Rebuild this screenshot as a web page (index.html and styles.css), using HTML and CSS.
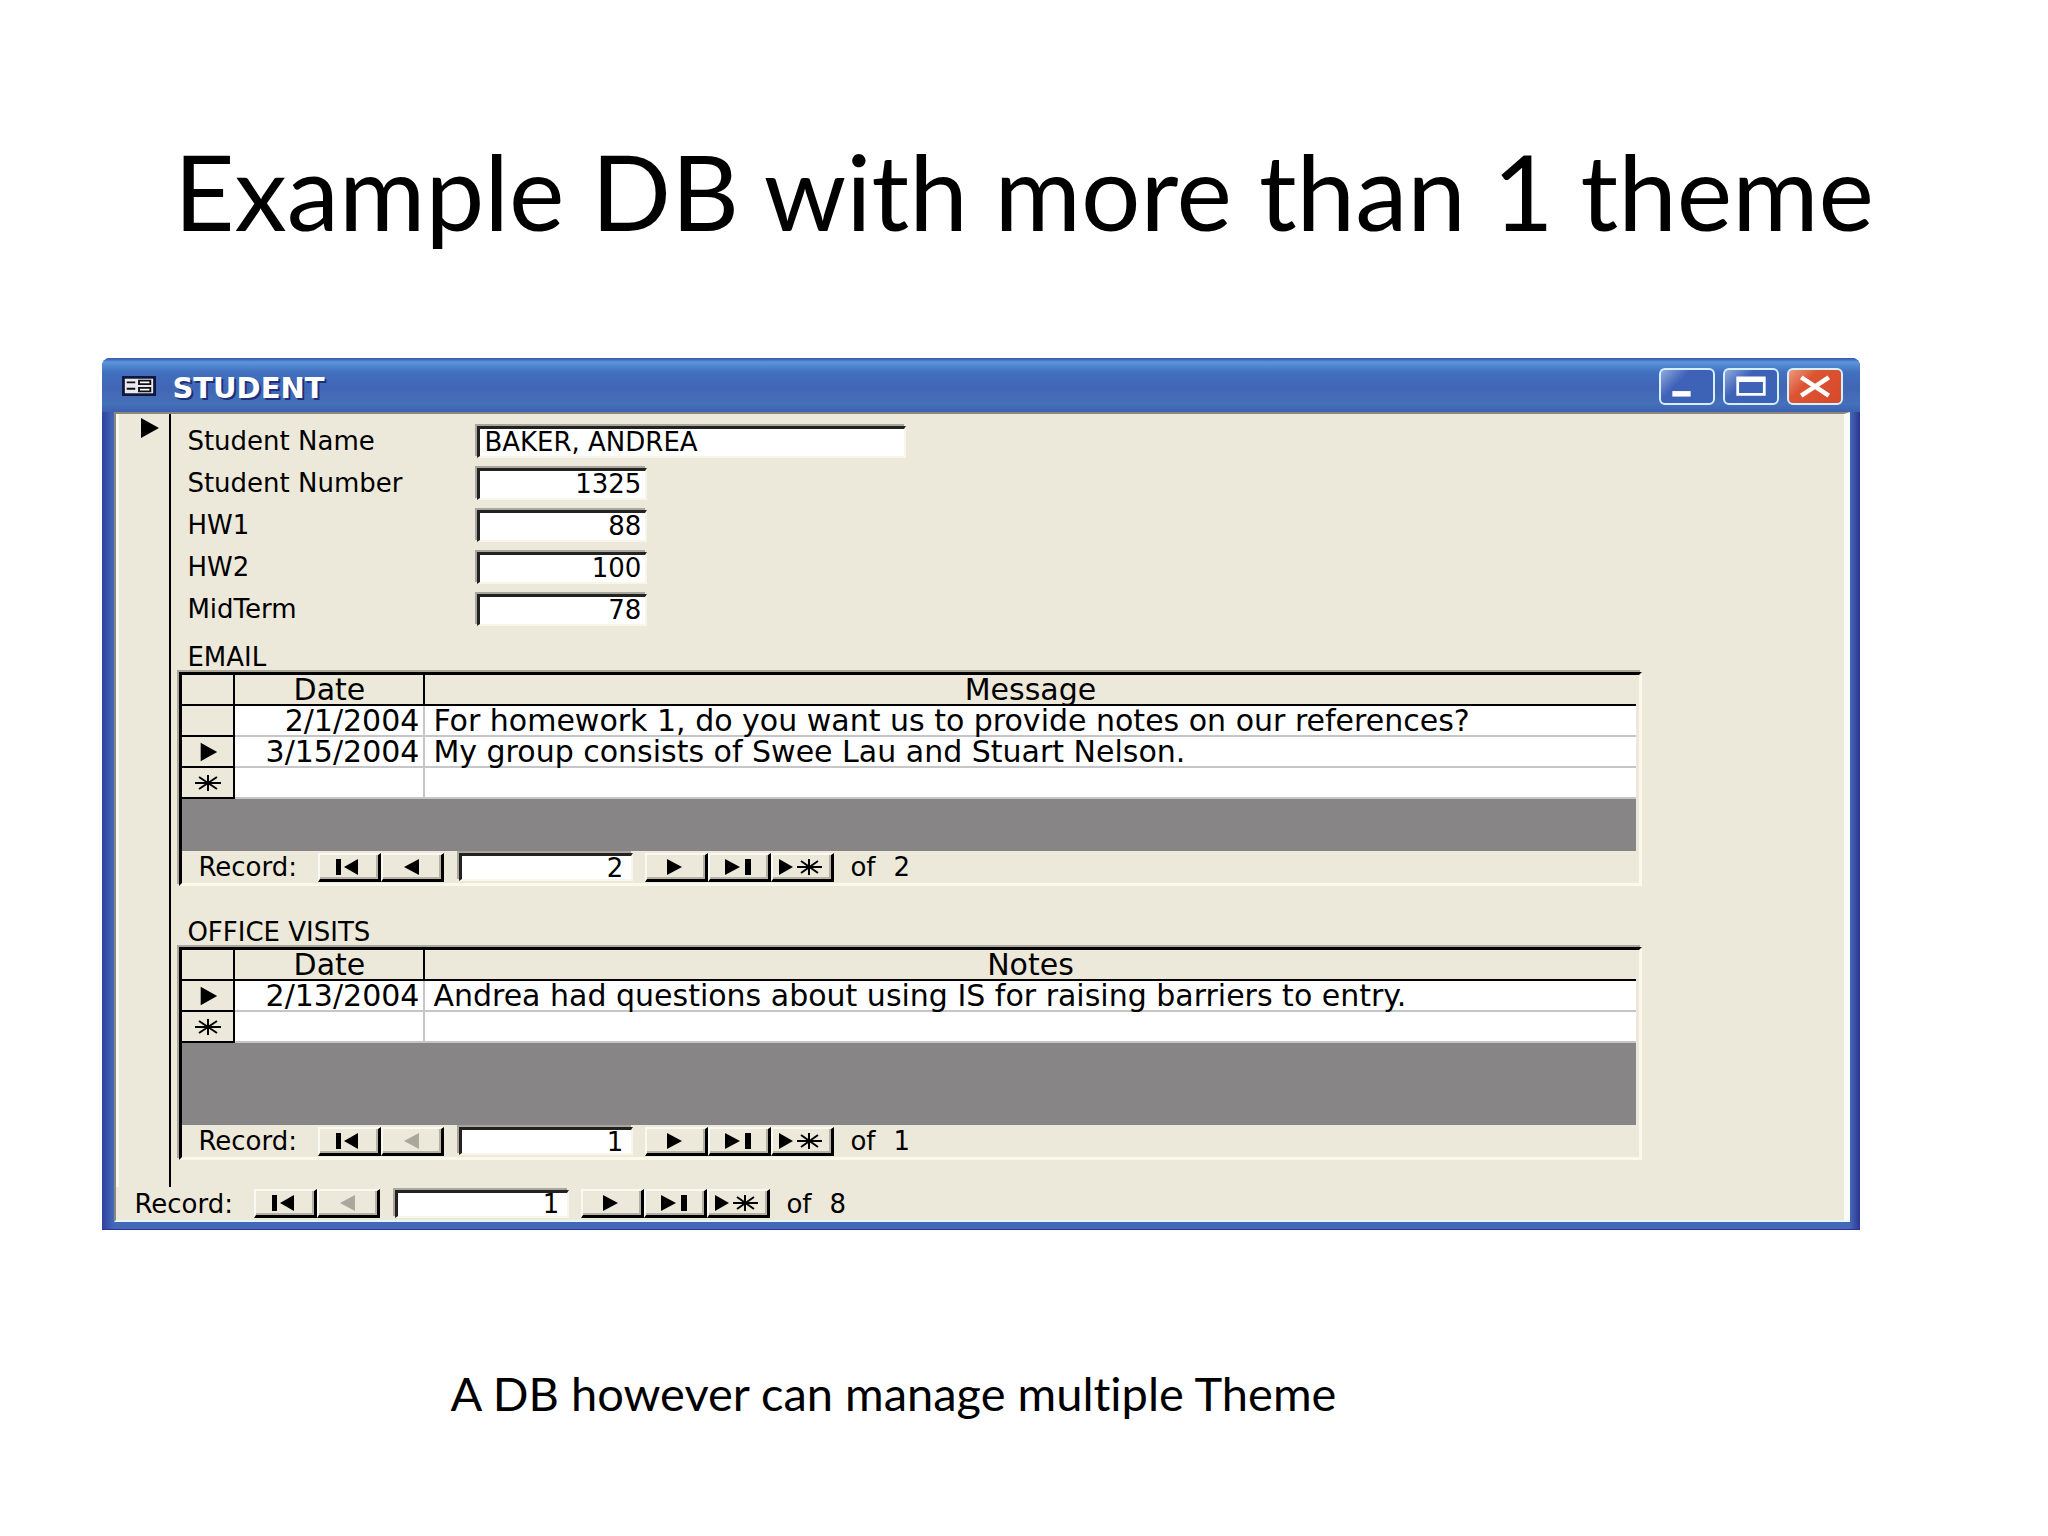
FILE: index.html
```html
<!DOCTYPE html>
<html lang="en">
<head>
  <meta charset="UTF-8">
  <title>Example DB with more than 1 theme</title>
  <link rel="stylesheet" href="styles.css">
</head>
<body>
  <!-- shared record navigation icons -->
  <svg class="defs" width="0" height="0">
    <symbol id="first" viewBox="0 0 48 24"><path d="M13 4h5v16h-5zM35 4v16L21 12z"/></symbol>
    <symbol id="prev" viewBox="0 0 48 24"><path d="M33 4v16L18 12z"/></symbol>
    <symbol id="next" viewBox="0 0 48 24"><path d="M17 4v16l15-8z"/></symbol>
    <symbol id="last" viewBox="0 0 48 24"><path d="M12 4v16l15-8zM32 4h6v16h-6z"/></symbol>
    <symbol id="new" viewBox="0 0 48 24"><path d="M3 4v16l14-8z"/><path class="star" d="M21 12h25M33 4v16M25 6l17 12M42 6L25 18"/></symbol>
    <symbol id="current" viewBox="0 0 24 24"><path d="M4 2v20l18-10z"/></symbol>
    <symbol id="star" viewBox="0 0 28 20"><path class="star" d="M1 10h26M14 2v16M5 4l18 12M23 4L5 16"/></symbol>
  </svg>

  <h1>Example DB with more than 1 theme</h1>

  <main class="window">
    <header class="titlebar">
      <svg class="form-icon" viewBox="0 0 36 22" preserveAspectRatio="none">
        <path d="M0 0h36v22H0z" fill="#10163c"/>
        <path d="M3 3h30v16H3z" fill="#e8e8ee"/>
        <path d="M5 7h9M5 14h9" stroke="#111" stroke-width="2"/>
        <path d="M18 5h12v4H18zM18 13h12v4H18z" fill="#fff" stroke="#111" stroke-width="2"/>
      </svg>
      <h2>STUDENT</h2>
      <div class="controls">
        <button type="button" aria-label="Minimize">
          <svg viewBox="0 0 56 36"><path d="M12 23h20v6H12z" fill="#fff"/></svg>
        </button>
        <button type="button" aria-label="Maximize">
          <svg viewBox="0 0 56 36"><path d="M12 7h32v21H12zM15 13v12h26V13z" fill="#fff" fill-rule="evenodd"/></svg>
        </button>
        <button type="button" class="close" aria-label="Close">
          <svg viewBox="0 0 56 36"><path d="M13 8l30 20M43 8L13 28" stroke="#fff" stroke-width="5"/></svg>
        </button>
      </div>
    </header>

    <div class="client">
      <div class="record">
        <div class="selector"><svg><use href="#current"/></svg></div>
        <form class="detail">
          <div class="field"><label for="name">Student Name</label><input class="wide" id="name" value="BAKER, ANDREA"></div>
          <div class="field"><label for="number">Student Number</label><input id="number" value="1325"></div>
          <div class="field"><label for="hw1">HW1</label><input id="hw1" value="88"></div>
          <div class="field"><label for="hw2">HW2</label><input id="hw2" value="100"></div>
          <div class="field"><label for="midterm">MidTerm</label><input id="midterm" value="78"></div>

          <h3>EMAIL</h3>
          <section class="subform">
            <table>
              <thead>
                <tr><th class="mark"></th><th class="date">Date</th><th>Message</th></tr>
              </thead>
              <tbody>
                <tr><td class="mark"></td><td class="date">2/1/2004</td><td>For homework 1, do you want us to provide notes on our references?</td></tr>
                <tr><td class="mark"><svg><use href="#current"/></svg></td><td class="date">3/15/2004</td><td>My group consists of Swee Lau and Stuart Nelson.</td></tr>
                <tr><td class="mark"><svg><use href="#star"/></svg></td><td class="date"></td><td></td></tr>
              </tbody>
            </table>
            <div class="empty"></div>
            <div class="nav">
              <label for="email-record">Record:</label>
              <button type="button" aria-label="First"><svg><use href="#first"/></svg></button>
              <button type="button" aria-label="Previous"><svg><use href="#prev"/></svg></button>
              <input id="email-record" value="2">
              <button type="button" aria-label="Next"><svg><use href="#next"/></svg></button>
              <button type="button" aria-label="Last"><svg><use href="#last"/></svg></button>
              <button type="button" aria-label="New"><svg><use href="#new"/></svg></button>
              <span class="total"><span>of</span><span>2</span></span>
            </div>
          </section>

          <h3 class="second">OFFICE VISITS</h3>
          <section class="subform">
            <table>
              <thead>
                <tr><th class="mark"></th><th class="date">Date</th><th>Notes</th></tr>
              </thead>
              <tbody>
                <tr><td class="mark"><svg><use href="#current"/></svg></td><td class="date">2/13/2004</td><td>Andrea had questions about using IS for raising barriers to entry.</td></tr>
                <tr><td class="mark"><svg><use href="#star"/></svg></td><td class="date"></td><td></td></tr>
              </tbody>
            </table>
            <div class="empty tall"></div>
            <div class="nav">
              <label for="visit-record">Record:</label>
              <button type="button" aria-label="First"><svg><use href="#first"/></svg></button>
              <button type="button" aria-label="Previous" disabled><svg><use href="#prev"/></svg></button>
              <input id="visit-record" value="1">
              <button type="button" aria-label="Next"><svg><use href="#next"/></svg></button>
              <button type="button" aria-label="Last"><svg><use href="#last"/></svg></button>
              <button type="button" aria-label="New"><svg><use href="#new"/></svg></button>
              <span class="total"><span>of</span><span>1</span></span>
            </div>
          </section>
        </form>
      </div>

      <div class="nav main-nav">
        <label for="student-record">Record:</label>
        <button type="button" aria-label="First"><svg><use href="#first"/></svg></button>
        <button type="button" aria-label="Previous" disabled><svg><use href="#prev"/></svg></button>
        <input id="student-record" value="1">
        <button type="button" aria-label="Next"><svg><use href="#next"/></svg></button>
        <button type="button" aria-label="Last"><svg><use href="#last"/></svg></button>
        <button type="button" aria-label="New"><svg><use href="#new"/></svg></button>
        <span class="total"><span>of</span><span>8</span></span>
      </div>
    </div>
  </main>

  <p class="caption">A DB however can manage multiple Theme</p>
</body>
</html>
```
FILE: styles.css
```css
* {
  box-sizing: border-box;
}

body {
  margin: 0;
  background: #fff;
  color: #000;
  font-family: "DejaVu Sans", sans-serif;
  font-size: 26px;
}

.defs {
  position: absolute;
}

h1 {
  margin: 0;
  padding-top: 126px;
  height: 358px;
  text-align: center;
  font-family: Lato, sans-serif;
  font-weight: normal;
  font-size: 105px;
  line-height: 128px;
}

.window {
  width: 85.8%;
  margin-left: 5%;
  padding: 0 10px 7px 12px;
  background: linear-gradient(90deg, #2f43a0, #4468b8 12px, #4468b8 calc(100% - 10px), #2c3592);
  border-bottom: 1px solid #2c3592;
  border-radius: 8px 8px 0 0;
}

.titlebar {
  display: flex;
  align-items: center;
  height: 54px;
  margin: 0 -10px 0 -12px;
  padding: 2px 17px 0 20px;
  border-radius: 8px 8px 0 0;
  background: linear-gradient(#2e55a8, #5b95dc 4px, #4270bf 14px, #4066b4 30px, #4670ba 46px, #3d60b0);
}

.form-icon {
  width: 34px;
  height: 20px;
}

h2 {
  margin: 0 auto 0 16px;
  padding-top: 4px;
  color: #fff;
  font-size: 29px;
  line-height: 32px;
  text-shadow: 2px 2px #1c2f78;
}

.controls {
  display: flex;
  gap: 8px;
}

.controls button {
  width: 56px;
  height: 37px;
  padding: 0;
  border: 2px solid #d5efff;
  border-radius: 6px;
  background: linear-gradient(135deg, #8fa9df, #3f62b8 35%, #3a63b5);
}

.controls .close {
  background: linear-gradient(135deg, #ea9a80, #dd5433 35%, #d4492a);
}

.controls svg {
  display: block;
  width: 100%;
  height: 100%;
}

.client {
  background: #ede9da;
  border: 2px solid #8b8880;
  border-right: 6px solid #fafaf8;
  border-bottom: 2px solid #e6f6fa;
}

.record {
  display: flex;
}

.selector {
  width: 55px;
  border-right: 2px solid #000;
  border-left: 3px solid #faf8ee;
  padding: 2px 0 0 18px;
}

.selector svg {
  display: block;
  width: 24px;
  height: 24px;
}

.detail {
  flex: 1;
  padding: 12px 202px 27px 8px;
}

.field {
  display: flex;
  height: 42px;
  padding-left: 8px;
}

.field label {
  width: 290px;
  line-height: 30px;
}

input {
  width: 170px;
  height: 32px;
  padding: 0 4px 2px;
  border: 2px solid #f8f6ea;
  border-top: 3px solid #222;
  border-left: 3px solid #222;
  background: #fff;
  box-shadow: -2px -2px #aaa69b;
  font: inherit;
  text-align: right;
}

input.wide {
  width: 429px;
  text-align: left;
}

h3 {
  margin: 6px 0 0;
  padding-left: 8px;
  font-size: 26px;
  font-weight: normal;
  line-height: 30px;
}

h3.second {
  margin-top: 31px;
}

.subform {
  padding-right: 3px;
  border: 3px solid #fbf9ea;
  border-top-color: #000;
  border-left-color: #000;
  box-shadow: -2px -2px #aaa69b;
}

table {
  width: 100%;
  table-layout: fixed;
  border-spacing: 0;
  background: #fff;
  font-size: 30px;
  line-height: 29px;
}

th {
  height: 31px;
  padding: 0;
  background: #ede9da;
  border-right: 2px solid #000;
  border-bottom: 2px solid #000;
  font-weight: normal;
}

td {
  height: 31px;
  padding: 0 8px;
  border-bottom: 2px solid #c6c6c8;
  white-space: nowrap;
}

th:last-child {
  border-right: 0;
}

.mark {
  width: 53px;
}

td.mark {
  padding: 0;
  background: #ede9da;
  border-right: 2px solid #000;
  border-bottom: 2px solid #000;
}

.mark svg {
  display: block;
  width: 28px;
  height: 22px;
  margin: 0 auto;
}

.date {
  width: 190px;
}

td.date {
  padding: 0 4px 0 0;
  border-right: 2px solid #c6c6c8;
  text-align: right;
}

.empty {
  height: 52px;
  background: #878586;
}

.empty.tall {
  height: 82px;
}

.nav {
  display: flex;
  align-items: center;
  height: 32px;
  padding-left: 16px;
  line-height: 28px;
}

.nav label {
  width: 120px;
}

.nav button {
  width: 63px;
  height: 29px;
  padding: 0;
  border: 2px solid #fbfaf2;
  border-right: 3px solid #000;
  border-bottom: 3px solid #000;
  background: #ede9da;
  box-shadow: inset -2px -2px #b5b1a5;
}

.nav button svg {
  display: block;
  width: 48px;
  height: 24px;
  margin-left: 3px;
}

.nav button:disabled svg {
  fill: #aaa79c;
}

.nav input {
  width: 174px;
  height: 28px;
  margin: 0 12px 0 15px;
  padding: 0 8px 0 4px;
}

.total {
  display: flex;
  gap: 18px;
  padding-left: 16px;
}

.main-nav {
  height: 33px;
  padding-left: 18px;
}

.star {
  fill: none;
  stroke: #000;
  stroke-width: 2;
}

.caption {
  margin: 135px 0 80px;
  padding-left: 22%;
  font-family: Lato, sans-serif;
  font-size: 47px;
  font-variant-ligatures: none;
  line-height: 56px;
}
```
